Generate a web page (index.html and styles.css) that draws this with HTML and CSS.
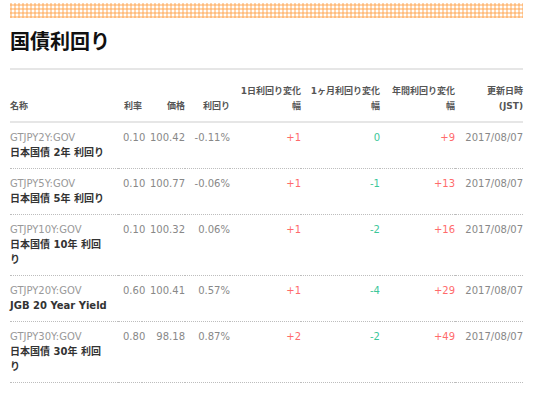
FILE: index.html
```html
<!DOCTYPE html>
<html lang="ja">
<head>
<meta charset="utf-8">
<title>国債利回り</title>
<link rel="stylesheet" href="styles.css">
</head>
<body>
<div class="page">
  <div class="stripe"></div>
  <h1 class="title">国債利回り</h1>
  <div class="rule"></div>
  <table class="bonds">
    <colgroup>
      <col class="c-name"><col class="c-rate"><col class="c-price"><col class="c-yield">
      <col class="c-d1"><col class="c-m1"><col class="c-y1"><col class="c-date">
    </colgroup>
    <thead>
      <tr>
        <th class="left">名称</th>
        <th>利率</th>
        <th>価格</th>
        <th>利回り</th>
        <th>1日利回り変化幅</th>
        <th>1ヶ月利回り変化幅</th>
        <th>年間利回り変化幅</th>
        <th>更新日時<br>(JST)</th>
      </tr>
    </thead>
    <tbody>
      <tr>
        <td class="left"><span class="code">GTJPY2Y:GOV</span><br><span class="name">日本国債 2年 利回り</span></td>
        <td>0.10</td><td>100.42</td><td>-0.11%</td>
        <td class="up">+1</td><td class="down">0</td><td class="up">+9</td><td>2017/08/07</td>
      </tr>
      <tr>
        <td class="left"><span class="code">GTJPY5Y:GOV</span><br><span class="name">日本国債 5年 利回り</span></td>
        <td>0.10</td><td>100.77</td><td>-0.06%</td>
        <td class="up">+1</td><td class="down">-1</td><td class="up">+13</td><td>2017/08/07</td>
      </tr>
      <tr>
        <td class="left"><span class="code">GTJPY10Y:GOV</span><br><span class="name">日本国債 10年 利回り</span></td>
        <td>0.10</td><td>100.32</td><td>0.06%</td>
        <td class="up">+1</td><td class="down">-2</td><td class="up">+16</td><td>2017/08/07</td>
      </tr>
      <tr>
        <td class="left"><span class="code">GTJPY20Y:GOV</span><br><span class="name">JGB 20 Year Yield</span></td>
        <td>0.60</td><td>100.41</td><td>0.57%</td>
        <td class="up">+1</td><td class="down">-4</td><td class="up">+29</td><td>2017/08/07</td>
      </tr>
      <tr>
        <td class="left"><span class="code">GTJPY30Y:GOV</span><br><span class="name">日本国債 30年 利回り</span></td>
        <td>0.80</td><td>98.18</td><td>0.87%</td>
        <td class="up">+2</td><td class="down">-2</td><td class="up">+49</td><td>2017/08/07</td>
      </tr>
    </tbody>
  </table>
</div>
</body>
</html>
```
FILE: styles.css
```css
html, body {
  margin: 0;
  padding: 0;
  background: #fff;
}
body {
  font-family: "DejaVu Sans", "Noto Sans CJK JP", sans-serif;
  color: #333;
}
.page {
  padding: 3px 11px 0 10px;
}
.stripe {
  height: 15px;
  background-color: #fff;
  background-image:
    repeating-linear-gradient(90deg, rgba(255, 160, 70, 0.45) 0 2px, transparent 2px 4px),
    repeating-linear-gradient(0deg, rgba(255, 160, 70, 0.45) 0 2px, transparent 2px 4px);
}
.title {
  margin: 12px 0 0;
  font-size: 20px;
  line-height: 24px;
  font-weight: bold;
  color: #111;
}
.rule {
  margin-top: 14px;
  height: 2px;
  background: #e6e6e6;
}
.bonds {
  width: 513px;
  table-layout: fixed;
  border-collapse: collapse;
  font-size: 10px;
  line-height: 15px;
}
.c-name { width: 108px; }
.c-rate { width: 24px; }
.c-price { width: 43px; }
.c-yield { width: 45px; }
.c-d1 { width: 71px; }
.c-m1 { width: 79px; }
.c-y1 { width: 75px; }
.c-date { width: 68px; }
.bonds th {
  font-size: 9px;
  font-weight: bold;
  color: #555;
  text-align: right;
  vertical-align: bottom;
  padding: 14px 0 7px 5px;
  border-bottom: 2px solid #e6e6e6;
}
.bonds td {
  text-align: right;
  vertical-align: top;
  color: #888;
  padding: 7px 0 8px 5px;
  border-bottom: 1px dotted #bdbdbd;
  white-space: nowrap;
}
.bonds th.left,
.bonds td.left {
  text-align: left;
  padding-left: 0;
  padding-right: 8px;
  white-space: normal;
}
.code {
  color: #999;
}
.name {
  font-weight: bold;
  color: #333;
}
.bonds td.up {
  color: #ff6b6b;
}
.bonds td.down {
  color: #3cc79a;
}
```
